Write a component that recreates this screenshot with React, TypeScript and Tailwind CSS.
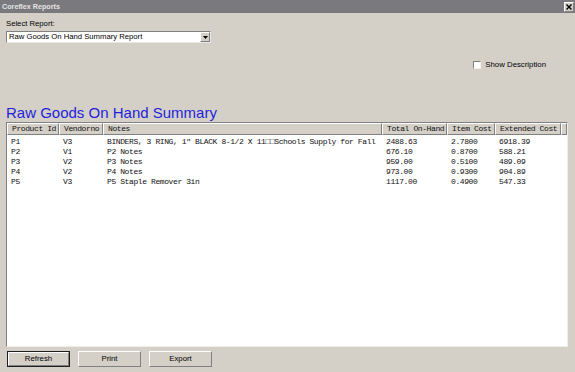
import React from "react";

const columns = [
  { label: "Product Id", w: "w-[52px]" },
  { label: "Vendorno", w: "w-[44px]" },
  { label: "Notes", w: "w-[279px]" },
  { label: "Total On-Hand", w: "w-[65px]" },
  { label: "Item Cost", w: "w-[48px]" },
  { label: "Extended Cost", w: "w-[66px]" },
  { label: "", w: "w-[6px]" },
];

const rows = [
  ["P1", "V3", "BINDERS, 3 RING, 1\" BLACK 8-1/2 X 11\u25A1\u25A1Schools Supply for Fall", "2488.63", "2.7800", "6918.39"],
  ["P2", "V1", "P2 Notes", "676.10", "0.8700", "588.21"],
  ["P3", "V2", "P3 Notes", "959.00", "0.5100", "489.09"],
  ["P4", "V2", "P4 Notes", "973.00", "0.9300", "904.89"],
  ["P5", "V3", "P5 Staple Remover 3in", "1117.00", "0.4900", "547.33"],
];

const raised = "border-t border-l border-t-white border-l-white border-r border-b border-r-[#808080] border-b-[#808080]";

function Button({ label, isDefault }: { label: string; isDefault?: boolean }) {
  return (
    <div className={`w-[63px] h-[16px] ${isDefault ? "border border-[#202020]" : ""}`}>
      <div className={`w-full h-full bg-[#d4d0c8] ${raised} flex items-center justify-center text-[7.8px] text-black`}>
        {label}
      </div>
    </div>
  );
}

export default function App() {
  return (
    <div className="w-[575px] h-[372px] bg-[#d4d0c8] flex flex-col font-['Liberation_Sans',Arial,sans-serif] overflow-hidden">
      {/* title bar */}
      <div className="h-[13px] bg-[#7a797e] flex items-center justify-between pl-[2px] pr-[1px]">
        <span className="text-[7.2px] font-bold text-[#e4e4e4] leading-none">Coreflex Reports</span>
        <div className={`w-[10px] h-[10px] bg-[#d4d0c8] ${raised} flex items-center justify-center`}>
          <svg width="6" height="6" viewBox="0 0 6 6">
            <path d="M0.5 0.5 L5.5 5.5 M5.5 0.5 L0.5 5.5" stroke="#000" strokeWidth="1.4" />
          </svg>
        </div>
      </div>

      <div className="pl-[6px] pr-[7px] flex flex-col">
        <div className="mt-[6px] h-[10px] flex items-center text-[7.7px] text-black">Select Report:</div>
        <div className="mt-[2px] w-[205px] h-[12px] bg-white border border-t-[#808080] border-l-[#808080] border-r-[#e8e8e8] border-b-[#e8e8e8] flex items-center justify-between">
          <span className="pl-[2px] text-[7.7px] text-black leading-none">Raw Goods On Hand Summary Report</span>
          <div className={`w-[10px] h-[10px] bg-[#d4d0c8] ${raised} flex items-center justify-center`}>
            <svg width="5" height="3" viewBox="0 0 5 3">
              <path d="M0 0 H5 L2.5 3 Z" fill="#000" />
            </svg>
          </div>
        </div>

        <div className="mt-[17px] h-[10px] flex items-center justify-end pr-[22px] gap-[4px]">
          <div className="w-[8px] h-[8px] bg-white border border-t-[#808080] border-l-[#808080] border-r-[#f0f0f0] border-b-[#f0f0f0]" />
          <span className="text-[7.8px] text-black leading-none">Show Description</span>
        </div>

        <div className="mt-[34px] h-[17px] flex items-center text-[15px] leading-[17px] text-[#1f1fdc]">
          Raw Goods On Hand Summary
        </div>

        <div className="mt-[1px] w-[562px] h-[225px] bg-white border border-t-[#808080] border-l-[#808080] border-r-[#eeeeea] border-b-[#eeeeea] flex flex-col font-['Liberation_Mono','DejaVu_Sans_Mono',monospace] text-[8px] tracking-[-0.4px] text-[#111]">
          <div className="flex h-[12px] shrink-0">
            {columns.map((c, i) => (
              <div key={i} className={`${c.w} h-full bg-[#d4d0c8] ${raised} flex items-center pl-[4px] whitespace-nowrap overflow-hidden`}>
                {c.label}
              </div>
            ))}
          </div>
          <div className="pt-[2px] flex flex-col">
            {rows.map((r, ri) => (
              <div key={ri} className="flex h-[10px] items-center">
                {r.map((cell, ci) => (
                  <div key={ci} className={`${columns[ci].w} pl-[4px] whitespace-nowrap overflow-hidden`}>
                    {cell}
                  </div>
                ))}
              </div>
            ))}
          </div>
        </div>

        <div className="mt-[4px] flex gap-[8px] pl-[1px]">
          <Button label="Refresh" isDefault />
          <Button label="Print" />
          <Button label="Export" />
        </div>
      </div>
    </div>
  );
}
